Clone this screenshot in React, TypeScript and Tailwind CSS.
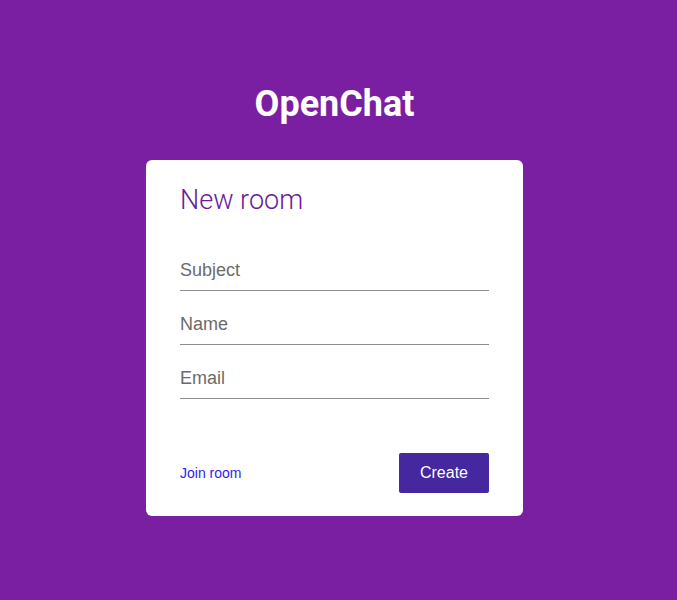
export default function App() {
    return (
        <div className="min-h-screen w-full bg-[#7b1fa2] flex flex-col items-center pt-[82px] pr-[8px]">
            <h1 className="text-white text-[36px] font-bold leading-[44px] font-['Roboto',sans-serif] mb-[34px]">
                OpenChat
            </h1>

            <div className="w-[377px] bg-white rounded-[6px] px-[34px] pt-[24px] pb-[23px]">
                <h2 className="text-[#6a1b9a] text-[27px] font-light leading-[32px] font-['Roboto',sans-serif]">
                    New room
                </h2>

                <form className="mt-[35px] flex flex-col gap-[14px]" onSubmit={e => e.preventDefault()}>
                    {["Subject", "Name", "Email"].map(label => (
                        <input
                            key={label}
                            type="text"
                            placeholder={label}
                            className="h-[40px] w-full border-b border-[#8e8e8e] outline-none text-[18px] font-['Liberation_Sans',Arial,sans-serif] text-[#333] placeholder:text-[#6b6b6b]"
                        />
                    ))}
                </form>

                <div className="mt-[54px] flex items-center justify-between">
                    <a href="#" className="text-[14px] text-[#2f22f5] font-['Liberation_Sans',Arial,sans-serif]">
                        Join room
                    </a>
                    <button className="w-[90px] h-[40px] bg-[#4527a0] text-white text-[16px] rounded-[2px] font-['Liberation_Sans',Arial,sans-serif]">
                        Create
                    </button>
                </div>
            </div>
        </div>
    )
}
